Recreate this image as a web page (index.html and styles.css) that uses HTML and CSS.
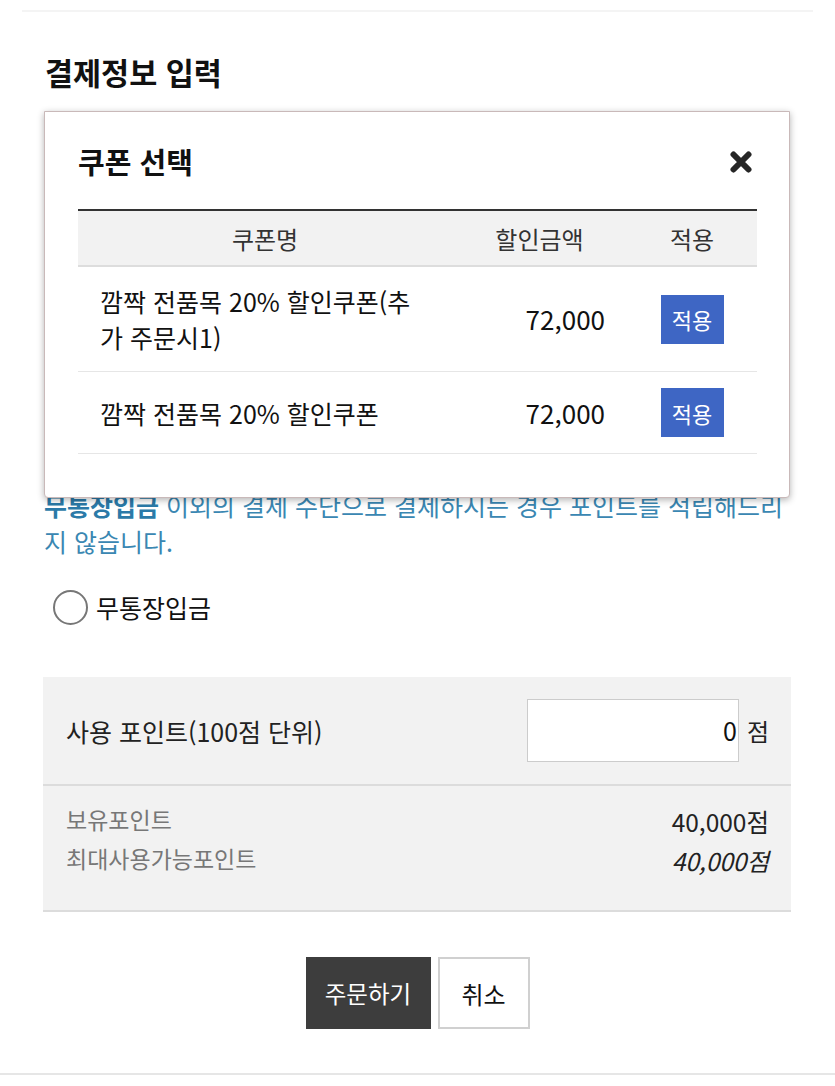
FILE: index.html
```html
<!DOCTYPE html>
<html lang="ko">
<head>
<meta charset="utf-8">
<title>결제정보 입력</title>
<link rel="stylesheet" href="styles.css">
</head>
<body>
<div class="topline"></div>
<main class="page">
  <h2 class="title">결제정보 입력</h2>
  <div class="covered"></div>
  <p class="notice"><strong>무통장입금</strong> 이외의 결제 수단으로 결제하시는 경우 포인트를 적립해드리지 않습니다.</p>
  <label class="radio-row">
    <span class="radio"></span>
    <span class="radio-label">무통장입금</span>
  </label>
  <section class="points">
    <div class="points-use">
      <span class="points-label">사용 포인트(100점 단위)</span>
      <span class="points-field">
        <span class="points-input">0</span>
        <span class="points-unit">점</span>
      </span>
    </div>
    <div class="points-info">
      <div class="info-row">
        <span class="info-label">보유포인트</span>
        <span class="info-value">40,000점</span>
      </div>
      <div class="info-row">
        <span class="info-label">최대사용가능포인트</span>
        <span class="info-value italic">40,000점</span>
      </div>
    </div>
  </section>
  <div class="actions">
    <button class="btn btn-dark">주문하기</button>
    <button class="btn btn-light">취소</button>
  </div>
</main>
<div class="bottomline"></div>

<div class="modal">
  <div class="modal-head">
    <h3 class="modal-title">쿠폰 선택</h3>
    <span class="modal-close" aria-label="닫기">
      <svg width="22" height="22" viewBox="0 0 22 22"><path d="M3.5 3.5 L18.5 18.5 M18.5 3.5 L3.5 18.5" stroke="#262626" stroke-width="6" stroke-linecap="round"/></svg>
    </span>
  </div>
  <table class="coupon-table">
    <colgroup><col class="c1"><col class="c2"><col class="c3"></colgroup>
    <thead>
      <tr><th>쿠폰명</th><th>할인금액</th><th>적용</th></tr>
    </thead>
    <tbody>
      <tr>
        <td class="name">깜짝 전품목 20% 할인쿠폰(추가 주문시1)</td>
        <td class="amount">72,000</td>
        <td class="apply"><button class="apply-btn">적용</button></td>
      </tr>
      <tr>
        <td class="name">깜짝 전품목 20% 할인쿠폰</td>
        <td class="amount">72,000</td>
        <td class="apply"><button class="apply-btn">적용</button></td>
      </tr>
    </tbody>
  </table>
</div>
</body>
</html>
```
FILE: styles.css
```css
* { box-sizing: border-box; }
html, body { margin: 0; padding: 0; background: #fff; }
body {
  font-family: "Noto Sans CJK KR", "Noto Sans", sans-serif;
  color: #111;
  position: relative;
  width: 835px;
  min-height: 1086px;
}
.topline {
  margin: 10px 22px 0;
  height: 2px;
  background: #f4f4f4;
}
.page { padding: 0 44px 0 43px; }
.title {
  margin: 40px 0 0 2px;
  font-size: 30.5px;
  line-height: 40px;
  font-weight: 700;
  color: #111;
}
.covered { height: 395px; }
.notice {
  margin: 0 0 0 1px;
  font-size: 25px;
  line-height: 36px;
  color: #3a87b2;
}
.notice strong { color: #2b7aa8; font-weight: 700; }
.radio-row {
  display: flex;
  align-items: center;
  gap: 8px;
  margin: 31px 0 0 10px;
  height: 34px;
}
.radio {
  width: 35px;
  height: 35px;
  border: 2px solid #777;
  border-radius: 50%;
  background: #fff;
}
.radio-label { font-size: 25px; color: #111; }
.points {
  margin-top: 53px;
  background: #f2f2f2;
  border-bottom: 2px solid #dcdcdc;
}
.points-use {
  height: 109px;
  padding: 0 22px 0 23px;
  display: flex;
  align-items: center;
  justify-content: space-between;
  border-bottom: 2px solid #dcdcdc;
}
.points-label { font-size: 25px; color: #222; }
.points-field { display: flex; align-items: center; gap: 8px; }
.points-input {
  width: 212px;
  height: 63px;
  background: #fff;
  border: 1px solid #ccc;
  font-size: 25px;
  line-height: 61px;
  text-align: right;
  padding-right: 1px;
  color: #111;
}
.points-unit { font-size: 24px; color: #222; }
.points-info {
  height: 124px;
  padding: 14px 22px 0 23px;
}
.info-row {
  display: flex;
  justify-content: space-between;
  align-items: flex-end;
  height: 39px;
}
.info-label { font-size: 23px; color: #777; line-height: 39px; }
.info-value { font-size: 24.5px; color: #222; line-height: 34px; }
.info-value.italic { font-style: italic; }
.actions {
  display: flex;
  justify-content: center;
  gap: 7px;
  margin-top: 45px;
  padding-left: 1px;
}
.btn {
  height: 72px;
  font-family: inherit;
  font-size: 24px;
  padding: 0;
  cursor: pointer;
}
.btn-dark { width: 125px; background: #3d3d3d; color: #fff; border: none; font-size: 23.5px; }
.btn-light { width: 92px; background: #fff; color: #111; border: 2px solid #d0d0d0; }
.bottomline {
  margin-top: 44px;
  height: 2px;
  background: #e6e6e6;
}

/* modal overlay */
.modal {
  position: absolute;
  left: 44px;
  top: 111px;
  width: 746px;
  height: 387px;
  background: #fff;
  border: 1px solid #c9b9b9;
  border-radius: 0 0 4px 4px;
  box-shadow: 0 2px 7px rgba(0, 0, 0, 0.3);
  padding: 0 32px 0 33px;
}
.modal-head {
  height: 97px;
  display: flex;
  align-items: center;
  justify-content: space-between;
}
.modal-title {
  margin: 0;
  font-size: 29px;
  font-weight: 700;
  color: #111;
  line-height: 36px;
}
.modal-close { display: flex; padding-right: 5px; margin-top: 2px; }
.coupon-table {
  width: 679px;
  border-collapse: collapse;
  table-layout: fixed;
}
.coupon-table col.c1 { width: 374px; }
.coupon-table col.c2 { width: 175px; }
.coupon-table col.c3 { width: 130px; }
.coupon-table thead tr { border-top: 2px solid #333; border-bottom: 2px solid #ddd; }
.coupon-table th {
  height: 56px;
  background: #f2f2f2;
  font-size: 24px;
  font-weight: 400;
  color: #333;
  padding: 0;
}
.coupon-table td {
  padding: 16px 22px;
  font-size: 25px;
  line-height: 36px;
  color: #111;
  vertical-align: middle;
  border-bottom: 1px solid #e6e6e6;
}
.coupon-table td.amount { text-align: right; font-size: 26px; }
.coupon-table td.apply { text-align: center; padding: 16px 0; }
.apply-btn {
  width: 63px;
  height: 49px;
  background: #3e66c4;
  color: #fff;
  border: none;
  font-family: inherit;
  font-size: 22px;
  padding: 0;
  vertical-align: middle;
}
```
